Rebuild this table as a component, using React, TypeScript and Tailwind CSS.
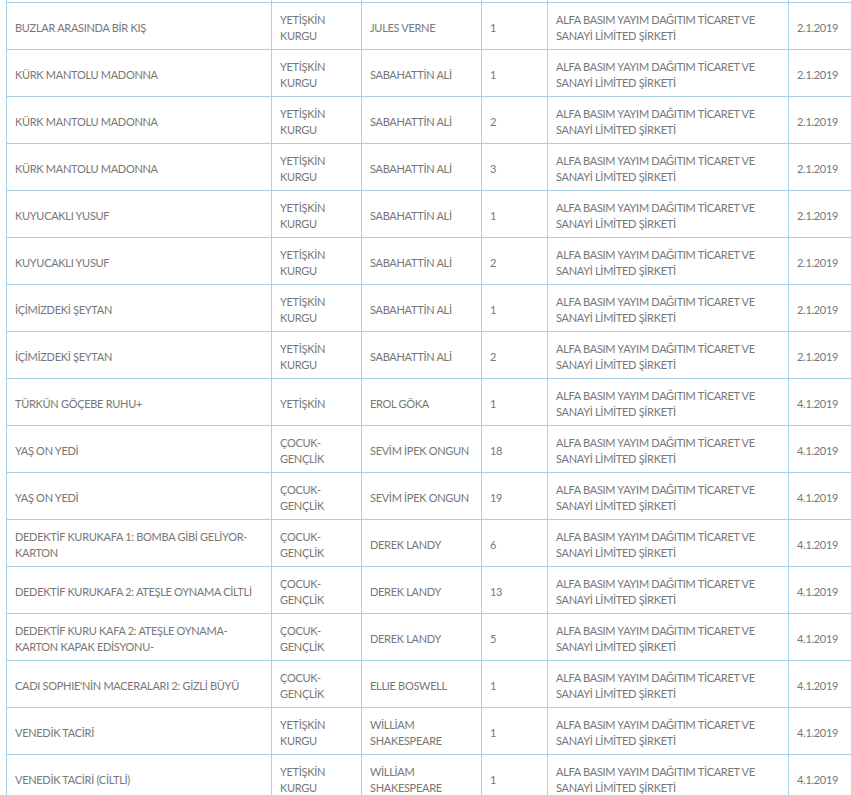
import React from "react";

type Row = [string, string, string, string, string];

const rows: Row[] = [
  ["BUZLAR ARASINDA BİR KIŞ", "YETİŞKİN KURGU", "JULES VERNE", "1", "2.1.2019"],
  ["KÜRK MANTOLU MADONNA", "YETİŞKİN KURGU", "SABAHATTİN ALİ", "1", "2.1.2019"],
  ["KÜRK MANTOLU MADONNA", "YETİŞKİN KURGU", "SABAHATTİN ALİ", "2", "2.1.2019"],
  ["KÜRK MANTOLU MADONNA", "YETİŞKİN KURGU", "SABAHATTİN ALİ", "3", "2.1.2019"],
  ["KUYUCAKLI YUSUF", "YETİŞKİN KURGU", "SABAHATTİN ALİ", "1", "2.1.2019"],
  ["KUYUCAKLI YUSUF", "YETİŞKİN KURGU", "SABAHATTİN ALİ", "2", "2.1.2019"],
  ["İÇİMİZDEKİ ŞEYTAN", "YETİŞKİN KURGU", "SABAHATTİN ALİ", "1", "2.1.2019"],
  ["İÇİMİZDEKİ ŞEYTAN", "YETİŞKİN KURGU", "SABAHATTİN ALİ", "2", "2.1.2019"],
  ["TÜRKÜN GÖÇEBE RUHU+", "YETİŞKİN", "EROL GÖKA", "1", "4.1.2019"],
  ["YAŞ ON YEDİ", "ÇOCUK-GENÇLİK", "SEVİM İPEK ONGUN", "18", "4.1.2019"],
  ["YAŞ ON YEDİ", "ÇOCUK-GENÇLİK", "SEVİM İPEK ONGUN", "19", "4.1.2019"],
  ["DEDEKTİF KURUKAFA 1: BOMBA GİBİ GELİYOR-KARTON", "ÇOCUK-GENÇLİK", "DEREK LANDY", "6", "4.1.2019"],
  ["DEDEKTİF KURUKAFA 2: ATEŞLE OYNAMA CİLTLİ", "ÇOCUK-GENÇLİK", "DEREK LANDY", "13", "4.1.2019"],
  ["DEDEKTİF KURU KAFA 2: ATEŞLE OYNAMA-KARTON KAPAK EDİSYONU-", "ÇOCUK-GENÇLİK", "DEREK LANDY", "5", "4.1.2019"],
  ["CADI SOPHIE'NİN MACERALARI 2: GİZLİ BÜYÜ", "ÇOCUK-GENÇLİK", "ELLIE BOSWELL", "1", "4.1.2019"],
  ["VENEDİK TACİRİ", "YETİŞKİN KURGU", "WİLLİAM SHAKESPEARE", "1", "4.1.2019"],
  ["VENEDİK TACİRİ (CİLTLİ)", "YETİŞKİN KURGU", "WİLLİAM SHAKESPEARE", "1", "4.1.2019"],
];

const cell =
  "border-l border-[#a9d0e8] pl-2 pr-2 pt-[4px] flex items-center leading-[16px] whitespace-nowrap";

function two(a: string, b: string) {
  return (
    <span>
      {a}
      <br />
      {b}
    </span>
  );
}

function split(s: string): React.ReactNode {
  if (s === "YETİŞKİN KURGU") return two("YETİŞKİN", "KURGU");
  if (s === "ÇOCUK-GENÇLİK") return two("ÇOCUK-", "GENÇLİK");
  if (s === "WİLLİAM SHAKESPEARE") return two("WİLLİAM", "SHAKESPEARE");
  if (s === "DEDEKTİF KURUKAFA 1: BOMBA GİBİ GELİYOR-KARTON")
    return two("DEDEKTİF KURUKAFA 1: BOMBA GİBİ GELİYOR-", "KARTON");
  if (s === "DEDEKTİF KURU KAFA 2: ATEŞLE OYNAMA-KARTON KAPAK EDİSYONU-")
    return two("DEDEKTİF KURU KAFA 2: ATEŞLE OYNAMA-", "KARTON KAPAK EDİSYONU-");
  return s;
}

const gridCls =
  "grid grid-cols-[265px_90px_120px_66px_241px_88px] h-[47px] border-b border-[#a9d0e8]";

export default function App() {
  return (
    <div
      className="w-[851px] h-[795px] overflow-hidden bg-white text-[11px] tracking-[-0.3px] text-[#777777]"
      style={{ fontFamily: "Lato, 'Open Sans', sans-serif" }}
    >
      <div className="ml-[6px] w-[870px] mt-[-44px] border-r border-[#a9d0e8]">
        <div className={gridCls}>
          <div className={cell}></div>
          <div className={cell}></div>
          <div className={cell}></div>
          <div className={cell}></div>
          <div className={cell}></div>
          <div className={cell}></div>
        </div>
        {rows.map((r, i) => (
          <div key={i} className={gridCls}>
            <div className={cell}>{split(r[0])}</div>
            <div className={cell}>{split(r[1])}</div>
            <div className={cell}>{split(r[2])}</div>
            <div className={cell}>{r[3]}</div>
            <div className={cell}>{two("ALFA BASIM YAYIM DAĞITIM TİCARET VE", "SANAYİ LİMİTED ŞİRKETİ")}</div>
            <div className={cell}>{r[4]}</div>
          </div>
        ))}
      </div>
    </div>
  );
}
